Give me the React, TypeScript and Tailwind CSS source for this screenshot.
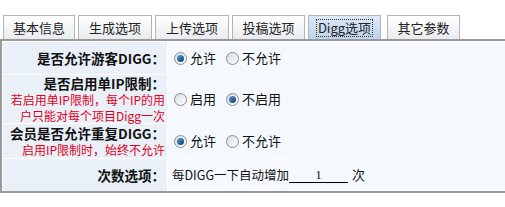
import React from "react";

const font = { fontFamily: '"Noto Sans CJK SC", "Noto Sans", sans-serif' };

const tabs = ["基本信息", "生成选项", "上传选项", "投稿选项", "Digg选项", "其它参数"];
const tabWidths = ["w-[72px]", "w-[74px]", "w-[74px]", "w-[73px]", "w-[73px]", "w-[73px]"];

function Radio({ checked, label }: { checked?: boolean; label: string }) {
    return (
        <label className="flex items-center gap-[3px] ml-[4px] mr-[6px]">
            <span className="w-[13px] h-[13px] rounded-full border border-[#8a8f96] bg-gradient-to-br from-[#d8dbe0] to-[#ffffff] flex items-center justify-center">
                {checked && <span className="w-[7px] h-[7px] rounded-full bg-gradient-to-br from-[#5a9ad0] to-[#0d3f6e]" />}
            </span>
            <span className="text-[13px] text-[#111]">{label}</span>
        </label>
    );
}

function Row({ h, label, note, children }: { h: string; label: string; note?: React.ReactNode; children: React.ReactNode }) {
    return (
        <div className={`flex gap-px ${h}`}>
            <div className="w-[164px] bg-[#eaf0f8] flex flex-col items-end justify-center pr-[2px]">
                <span className="block text-[13.5px] leading-[17px] font-bold text-[#111]">{label}</span>
                {note}
            </div>
            <div className="flex-1 bg-[#f5f9fe] flex items-center pl-[2px]">{children}</div>
        </div>
    );
}

export default function App() {
    return (
        <div className="w-[505px] h-[207px] bg-white" style={font}>
            <div className="flex gap-[3px] pl-[3px] pt-[15px] h-[39px]">
                {tabs.map((t, i) => (
                    <div
                        key={t}
                        className={`${tabWidths[i]} ${i === 5 ? "ml-[3px]" : ""} h-[24px] border border-[#b4b4b4] border-b-0 flex items-center justify-center text-[13px] text-[#222] ${
                            i === 4
                                ? "bg-gradient-to-b from-[#dde9f6] to-[#bcd3ec] border-[#8fa8c4]"
                                : "bg-gradient-to-b from-[#ffffff] to-[#e9ecef]"
                        }`}
                    >
                        {i === 4 ? <span className="border border-dotted border-[#333] px-[1px] leading-[16px]">{t}</span> : t}
                    </div>
                ))}
            </div>
            <div className="border-t-2 border-l-2 border-b-2 border-[#9a9a9a] bg-white flex flex-col gap-px pt-px pl-px">
                <Row h="h-[32px]" label="是否允许游客DIGG：">
                    <Radio checked label="允许" />
                    <Radio label="不允许" />
                </Row>
                <Row
                    h="h-[48px]"
                    label="是否启用单IP限制："
                    note={
                        <span className="block text-[12px] text-[#e0001b] text-right leading-[16px] font-normal">
                            若启用单IP限制，每个IP的用
                            <br />
                            户只能对每个项目Digg一次
                        </span>
                    }
                >
                    <Radio label="启用" />
                    <Radio checked label="不启用" />
                </Row>
                <Row
                    h="h-[34px]"
                    label="会员是否允许重复DIGG："
                    note={<span className="block text-[12px] text-[#e0001b] leading-[16px]">启用IP限制时，始终不允许</span>}
                >
                    <Radio checked label="允许" />
                    <Radio label="不允许" />
                </Row>
                <Row h="h-[32px]" label="次数选项：">
                    <span className="text-[12.5px] text-[#111] ml-[2px]">每DIGG一下自动增加</span>
                    <span className="w-[59px] border-b border-black text-center text-[13px] leading-[15px] text-[#222]" style={{ fontFamily: '"Liberation Serif", serif' }}>
                        1
                    </span>
                    <span className="text-[13px] text-[#111] ml-[4px]">次</span>
                </Row>
            </div>
        </div>
    );
}
